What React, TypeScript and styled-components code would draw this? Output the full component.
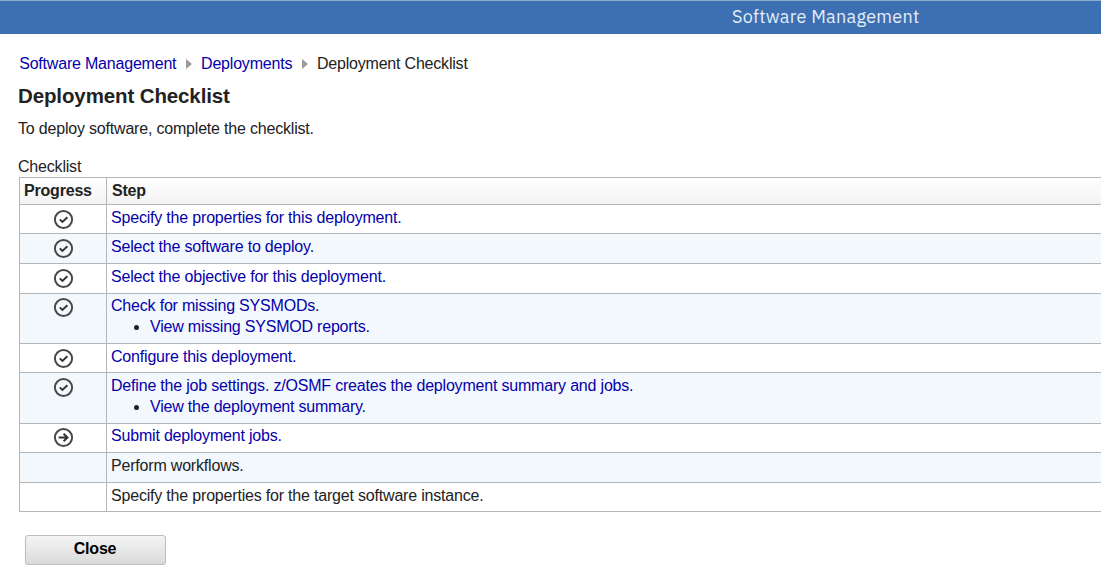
import React from "react";
import styled, { createGlobalStyle } from "styled-components";

const GlobalStyle = createGlobalStyle`
  * { box-sizing: border-box; }
  body {
    margin: 0;
    background: #fff;
    color: #222;
    font: 16px/20px "Liberation Sans", Arial, sans-serif;
    letter-spacing: -0.193px;
    overflow: hidden;
  }
`;

const TitleBar = styled.header`
  height: 34px;
  padding-left: 732px;
  border-top: 1px solid #8fabc9;
  background: #3d70b2;
  color: #e4edf8;
  font: 18px/32px "IBM Plex Sans", "Noto Sans", sans-serif;
  letter-spacing: 0.3px;
  white-space: nowrap;
`;

const Main = styled.main`
  padding: 20px 0 0 18px;
  white-space: nowrap;
`;

const Breadcrumb = styled.nav`
  display: flex;
  align-items: center;
  height: 20px;
  padding-left: 1.2px;
  letter-spacing: -0.2px;
`;

const Separator = styled.svg`
  width: 6px;
  height: 10px;
  margin: 0 8.7px 0 10px;
  fill: #9a9a9a;
`;

const StepLink = styled.a`
  color: #0600ab;
  text-decoration: none;
`;

const Heading = styled.h1`
  margin: 10px 0 0;
  font-size: 20.5px;
  line-height: 24px;
  letter-spacing: -0.12px;
`;

const Intro = styled.p`
  margin: 11px 0 0;
`;

const Caption = styled.div`
  margin-top: 18px;
`;

const Table = styled.div`
  width: 1100px;
  margin-left: 1px;
  border: 1px solid #b4b7b9;
  border-bottom: 0;
`;

const Row = styled.div<{ $height: number; $shaded?: boolean }>`
  display: grid;
  grid-template-columns: 87px 1fr;
  height: ${(p) => p.$height}px;
  border-bottom: 1px solid #b4b7b9;
  background: ${(p) => (p.$shaded ? "#f3f8fd" : "#fff")};
`;

const HeaderRow = styled(Row)`
  background: linear-gradient(#fff, #f3f3f3);
  font-weight: bold;
  line-height: 26px;
`;

const ProgressCell = styled.div<{ $inset: number }>`
  padding: ${(p) => p.$inset + 1}px 0 0 33px;
  border-right: 1px solid #b4b7b9;
`;

const StepCell = styled.div<{ $inset: number }>`
  padding: ${(p) => p.$inset}px 0 0 4px;
`;

const HeaderCell = styled.div`
  padding-left: 4px;
  & + & { border-left: 1px solid #b4b7b9; margin-left: -1px; padding-left: 5px; }
`;

const StatusIcon = styled.svg`
  display: block;
  width: 21px;
  height: 21px;
  fill: none;
  stroke: #484848;
  stroke-width: 2;
`;

const SubList = styled.ul`
  margin: 1px 0 0;
  padding-left: 39px;
  letter-spacing: -0.21px;
`;

const CloseButton = styled.button`
  display: block;
  width: 141px;
  height: 30px;
  margin: 23px 0 0 7px;
  padding: 0 1px 3px 0;
  border: 1px solid #bdbdbd;
  border-radius: 3px;
  background: linear-gradient(#f4f4f4, #dadada);
  box-shadow: 0 1px 1px rgba(0, 0, 0, 0.1);
  color: #000;
  font: bold 16px/20px "Liberation Sans", Arial, sans-serif;
  letter-spacing: -0.2px;
`;

type Status = "done" | "current" | "pending";

interface Step {
  text: string;
  status: Status;
  height: number;
  inset?: number;
  sub?: string;
}

const steps: Step[] = [
  { text: "Specify the properties for this deployment.", status: "done", height: 29 },
  { text: "Select the software to deploy.", status: "done", height: 30 },
  { text: "Select the objective for this deployment.", status: "done", height: 30 },
  {
    text: "Check for missing SYSMODs.",
    status: "done",
    height: 50,
    inset: 2,
    sub: "View missing SYSMOD reports.",
  },
  { text: "Configure this deployment.", status: "done", height: 29 },
  {
    text: "Define the job settings. z/OSMF creates the deployment summary and jobs.",
    status: "done",
    height: 51,
    sub: "View the deployment summary.",
  },
  { text: "Submit deployment jobs.", status: "current", height: 29, inset: 2 },
  { text: "Perform workflows.", status: "pending", height: 30 },
  { text: "Specify the properties for the target software instance.", status: "pending", height: 29 },
];

function ProgressIcon({ status }: { status: Status }) {
  if (status === "pending") return null;
  return (
    <StatusIcon viewBox="0 0 21 21" aria-label={status}>
      <circle cx="10.5" cy="10.5" r="8.6" />
      {status === "done" ? (
        <path d="M6.8 10.4l2.6 2.5 5-4.6" stroke="#333" />
      ) : (
        <path d="M5.6 10.5h9M10.6 6.7l3.9 3.8-3.9 3.8" stroke="#333" />
      )}
    </StatusIcon>
  );
}

function Arrow() {
  return (
    <Separator viewBox="0 0 6 10">
      <path d="M0 0l6 5-6 5z" />
    </Separator>
  );
}

export default function App() {
  return (
    <>
      <GlobalStyle />
      <TitleBar>Software Management</TitleBar>
      <Main>
        <Breadcrumb>
          <StepLink>Software Management</StepLink>
          <Arrow />
          <StepLink>Deployments</StepLink>
          <Arrow />
          <span>Deployment Checklist</span>
        </Breadcrumb>
        <Heading>Deployment Checklist</Heading>
        <Intro>To deploy software, complete the checklist.</Intro>
        <Caption>Checklist</Caption>
        <Table>
          <HeaderRow $height={27}>
            <HeaderCell>Progress</HeaderCell>
            <HeaderCell>Step</HeaderCell>
          </HeaderRow>
          {steps.map(({ text, status, height, inset = 3, sub }, i) => (
            <Row key={text} $height={height} $shaded={i % 2 === 1}>
              <ProgressCell $inset={inset}>
                <ProgressIcon status={status} />
              </ProgressCell>
              <StepCell $inset={inset}>
                {status === "pending" ? <span>{text}</span> : <StepLink>{text}</StepLink>}
                {sub && (
                  <SubList>
                    <li>
                      <StepLink>{sub}</StepLink>
                    </li>
                  </SubList>
                )}
              </StepCell>
            </Row>
          ))}
        </Table>
        <CloseButton>Close</CloseButton>
      </Main>
    </>
  );
}
